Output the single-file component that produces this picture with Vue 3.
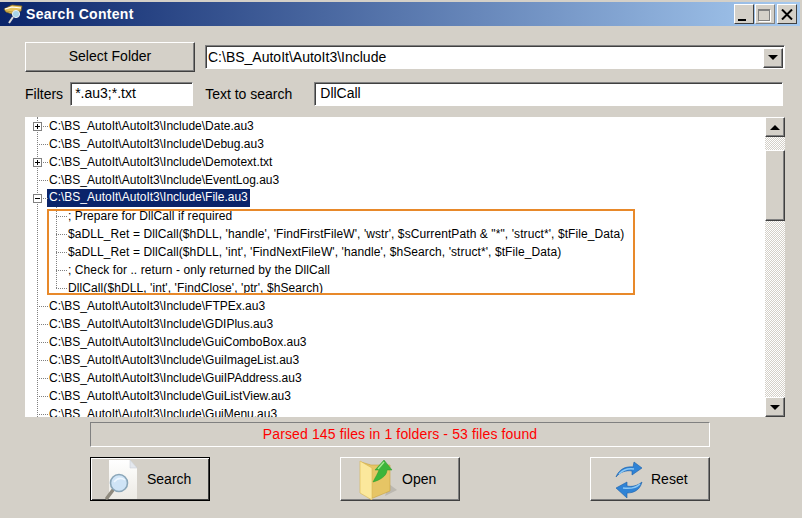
<script setup>
const before = [
  { t: 'Date.au3', box: 'plus' },
  { t: 'Debug.au3' },
  { t: 'Demotext.txt', box: 'plus' },
  { t: 'EventLog.au3' },
]
const children = [
  "; Prepare for DllCall if required",
  "$aDLL_Ret = DllCall($hDLL, 'handle', 'FindFirstFileW', 'wstr', $sCurrentPath & \"*\", 'struct*', $tFile_Data)",
  "$aDLL_Ret = DllCall($hDLL, 'int', 'FindNextFileW', 'handle', $hSearch, 'struct*', $tFile_Data)",
  "; Check for .. return - only returned by the DllCall",
  "DllCall($hDLL, 'int', 'FindClose', 'ptr', $hSearch)",
]
const after = ['FTPEx.au3', 'GDIPlus.au3', 'GuiComboBox.au3', 'GuiImageList.au3', 'GuiIPAddress.au3', 'GuiListView.au3', 'GuiMenu.au3']
const base = 'C:\\BS_AutoIt\\AutoIt3\\Include\\'
</script>

<template>
  <div class="win">
    <header class="title">
      <svg class="appicon" width="20" height="22" viewBox="0 0 20 22">
        <path d="M1 6 L9 2 L19 3 L18 8 L9 11 L3 9Z" fill="#e6c25a" stroke="#7d6220" stroke-width=".7"/>
        <path d="M2 6 L9 4 L18 5" stroke="#fff" stroke-width="1.2" fill="none"/>
        <path d="M3 8 L9 9 L18 7" stroke="#b89a40" fill="none"/>
        <circle cx="13" cy="11" r="3.6" fill="#a8d4e8" stroke="#e8eef4"/>
        <path d="M10 14 L6 20" stroke="#dcdcdc" stroke-width="2"/>
      </svg>
      <span class="title-text">Search Content</span>
      <div class="caps">
        <span class="cap"><i class="min"></i></span>
        <span class="cap dis"><i class="max"></i></span>
        <span class="cap x-cap">
          <svg width="12" height="11" viewBox="0 0 12 11"><path d="M1 0.5 L11 10.5 M11 0.5 L1 10.5" stroke="#000" stroke-width="2"/></svg>
        </span>
      </div>
    </header>

    <div class="body">
      <div class="row1">
        <button class="btn folder">Select Folder</button>
        <div class="combo">
          <span class="combo-text">C:\BS_AutoIt\AutoIt3\Include</span>
          <span class="sb-btn combo-btn"><i class="down"></i></span>
        </div>
      </div>

      <div class="row2">
        <label class="lab">Filters</label>
        <div class="input filt">*.au3;*.txt</div>
        <label class="lab lab2">Text to search</label>
        <div class="input txt">DllCall</div>
      </div>

      <div class="tree">
        <div class="rows">
          <div class="vline"></div>
          <div v-for="r in before" :key="r.t" class="node">
            <span class="hline"></span>
            <span v-if="r.box" class="exp"><i class="h"></i><i class="v"></i></span>
            <span class="label">{{ base + r.t }}</span>
          </div>
          <div class="node">
            <span class="hline"></span>
            <span class="exp"><i class="h"></i></span>
            <span class="label sel">{{ base }}File.au3</span>
          </div>
          <div class="kids">
            <div class="kline"></div>
            <div v-for="c in children" :key="c" class="node kid">
              <span class="hline khline"></span>
              <span class="label klabel">{{ c }}</span>
            </div>
          </div>
          <div v-for="r in after" :key="r" class="node">
            <span class="hline"></span>
            <span class="label">{{ base + r }}</span>
          </div>
          <div class="orange"></div>
        </div>
        <div class="scroll">
          <span class="sb-btn"><i class="up"></i></span>
          <div class="track">
            <div class="thumb"></div>
          </div>
          <span class="sb-btn"><i class="down"></i></span>
        </div>
      </div>

      <div class="status">Parsed 145 files in 1 folders - 53 files found</div>

      <div class="actions">
        <button class="btn act default">
          <svg width="47" height="42" viewBox="0 0 47 42">
            <defs>
              <linearGradient id="pg" x1="0" y1="0" x2="0" y2="1">
                <stop offset="0" stop-color="#fff"/><stop offset="1" stop-color="#eceae4"/>
              </linearGradient>
            </defs>
            <path d="M9 2 H30 L37 10 V41 H9Z" fill="url(#pg)"/>
            <path d="M30 2 L37 10 H30Z" fill="#e4e8ee" stroke="#c4cad0" stroke-width=".5"/>
            <path d="M13 32 L7 40" stroke="#8f8a7e" stroke-width="3.5" stroke-linecap="round"/>
            <circle cx="19" cy="25" r="8.5" fill="#cfe4f6" stroke="#8aa6b8" stroke-width="1.6"/>
            <path d="M14 24 Q19 18 25 22" stroke="#eef7ff" stroke-width="1.5" fill="none"/>
          </svg>
          <span>Search</span>
        </button>
        <button class="btn act">
          <svg width="53" height="42" viewBox="0 0 53 42">
            <path d="M36 38 L48 32 L40 26Z" fill="#a8a49c" opacity=".55"/>
            <path d="M12 4 L22 7 H41 V33 L24 40 L12 34Z" fill="#e6c565" stroke="#c9a440" stroke-width=".6"/>
            <path d="M11 3 L23 10 V42 L11 35Z" fill="#fbe89c" stroke="#d8b650" stroke-width=".6"/>
            <path d="M35 2 L43 12 L38 12 C38 18 31 22 24 24 C26 20 29 15 30 12 L26 12Z" fill="#3db53a" stroke="#2b9a2b" stroke-width=".5"/>
            <path d="M35 4 L29 11" stroke="#a5ea90" stroke-width="1.4"/>
          </svg>
          <span>Open</span>
        </button>
        <button class="btn act">
          <svg width="52" height="42" viewBox="0 0 52 42">
            <path d="M17 19 C20 11 27 8 34 9 L35 4 L43 10 L33 17 L33 13 C27 12 21 14 17 19Z" fill="#2f83d6" stroke="#1d5fa8" stroke-width=".6"/>
            <path d="M20 16 C24 12 29 10 35 11" stroke="#8cc8f4" stroke-width="1.5" fill="none"/>
            <path d="M43 24 C41 32 35 35 28 35 L28 40 L17 30 L28 24 L28 28 C33 29 38 28 43 24Z" fill="#2f83d6" stroke="#1d5fa8" stroke-width=".6"/>
            <path d="M24 30 C31 31 37 30 41 26" stroke="#8cc8f4" stroke-width="1.5" fill="none"/>
          </svg>
          <span>Reset</span>
        </button>
      </div>
    </div>
  </div>
</template>

<style>
html, body { margin: 0; background: #d4d0c8; }
</style>

<style scoped>
.win {
  width: 802px; height: 518px; background: #d4d0c8; overflow: hidden;
  font-family: "Liberation Sans", Arial, sans-serif; font-size: 14px; color: #000;
  padding-top: 2px; box-sizing: border-box;
}
.title {
  width: 800px; height: 24px; display: flex; align-items: center; box-sizing: border-box; padding: 0 0 0 3px;
  background: linear-gradient(90deg, #0a246a 0%, #a6caf0 100%);
}
.appicon { flex: none; margin-right: 3px; }
.title-text { color: #fff; font-weight: bold; font-size: 14px; letter-spacing: .3px; }
.caps { margin-left: auto; display: flex; margin-right: 3px; }
.cap {
  width: 20px; height: 20px; background: #d4d0c8; box-sizing: border-box; position: relative;
  border: 1px solid; border-color: #fff #404040 #404040 #fff; display: flex; align-items: center; justify-content: center;
}
.cap.dis { margin: 0 2px 0 1px; border-color: #fff #808080 #808080 #fff; }
.min { position: absolute; left: 3px; bottom: 2px; width: 8px; height: 2px; background: #000; }
.max { position: absolute; left: 2px; top: 4px; width: 12px; height: 12px; box-sizing: border-box; border: 1px solid #808080; border-top-width: 2px; box-shadow: 1px 1px 0 #fff; }

.body { padding: 16px 17px 0 25px; }
.btn {
  background: #d4d0c8; border: 1px solid; border-color: #fff #404040 #404040 #fff; box-shadow: inset -1px -1px 0 #808080;
  font: inherit; color: #000; padding: 0; margin: 0; box-sizing: border-box;
}
.row1 { display: flex; align-items: flex-start; height: 30px; }
.folder { flex: none; width: 170px; height: 30px; padding-bottom: 2px; }
.combo {
  flex: none; margin-left: 10px; margin-top: 3px; width: 580px; height: 24px; box-sizing: border-box; background: #fff; display: flex; align-items: center;
  border: 1px solid; border-color: #808080 #fff #fff #808080; box-shadow: inset 1px 1px 0 #404040; padding-left: 2px;
}
.combo-text { flex: 1; }
.sb-btn {
  width: 20px; height: 20px; box-sizing: border-box; background: #d4d0c8; flex: none; display: flex; align-items: center; justify-content: center;
  border: 1px solid; border-color: #fff #404040 #404040 #fff; box-shadow: inset -1px -1px 0 #808080;
}
.combo-btn { margin-right: 1px; margin-top: 1px; }
.down { width: 0; height: 0; border: 4px solid transparent; border-top: 5px solid #000; border-bottom: 0; border-left-width: 5px; border-right-width: 5px; }
.up { width: 0; height: 0; border: 4px solid transparent; border-bottom: 5px solid #000; border-top: 0; border-left-width: 5px; border-right-width: 5px; }

.row2 { display: flex; align-items: center; margin-top: 10px; height: 24px; white-space: nowrap; width: 760px; }
.lab { flex: none; }
.input {
  flex: none; height: 24px; box-sizing: border-box; background: #fff; line-height: 21px; padding-left: 4px;
  border: 1px solid; border-color: #808080 #fff #fff #808080; box-shadow: inset 1px 1px 0 #404040;
}
.filt { width: 123px; margin-left: 7px; }
.lab2 { margin-left: 12px; }
.txt { width: 469px; margin-left: 22px; padding-left: 5px; }

.tree { margin-top: 11px; width: 760px; height: 300px; display: flex; background: #fff; overflow: hidden; font-size: 12px; }
.rows { flex: 1; position: relative; overflow: hidden; }
.vline { position: absolute; left: 12px; top: 0; bottom: 0; border-left: 1px dotted #808080; }
.node { height: 18px; position: relative; display: flex; align-items: center; white-space: nowrap; padding-left: 24px; }
.hline { position: absolute; left: 12px; top: 9px; width: 11px; border-top: 1px dotted #808080; }
.exp {
  position: absolute; left: 8px; top: 5px; width: 9px; height: 9px; box-sizing: border-box; border: 1px solid #808080; background: #fff;
}
.exp .h { position: absolute; left: 1px; top: 3px; width: 5px; height: 1px; background: #000; }
.exp .v { position: absolute; left: 3px; top: 1px; width: 1px; height: 5px; background: #000; }
.label { line-height: 16px; }
.klabel { letter-spacing: .09px; }
.sel { background: #0a246a; color: #fff; margin-left: -2px; padding: 0 2px; height: 18px; line-height: 17px; }
.kids { position: relative; }
.kline { position: absolute; left: 31px; top: 0; height: 81px; border-left: 1px dotted #808080; }
.kid { padding-left: 43px; }
.khline { left: 31px; width: 11px; }
.orange {
  position: absolute; left: 22px; top: 92px; width: 588px; height: 86px; box-sizing: border-box; border: 2px solid #e8892a;
}
.scroll { width: 20px; display: flex; flex-direction: column; }
.track {
  flex: 1; background-color: #fff;
  background-image: conic-gradient(#d4d0c8 25%, #fff 25% 50%, #d4d0c8 50% 75%, #fff 75%); background-size: 2px 2px;
}
.thumb {
  margin-top: 13px; height: 71px; box-sizing: border-box; background: #d4d0c8;
  border: 1px solid; border-color: #fff #404040 #404040 #fff; box-shadow: inset -1px -1px 0 #808080;
}
.status {
  margin: 5px 0 0 65px; width: 620px; height: 25px; box-sizing: border-box; text-align: center; color: #f00; line-height: 23px; letter-spacing: .13px;
  border: 1px solid; border-color: #808080 #fff #fff #808080;
}
.actions { display: flex; margin: 10px 0 0 65px; width: 620px; justify-content: space-between; }
.act { width: 120px; height: 44px; display: flex; align-items: center; padding-left: 8px; }
.act svg { flex: none; }
.default { border: 1px solid #000; box-shadow: inset 1px 1px 0 #fff, inset -1px -1px 0 #404040; padding-left: 9px; }
</style>
